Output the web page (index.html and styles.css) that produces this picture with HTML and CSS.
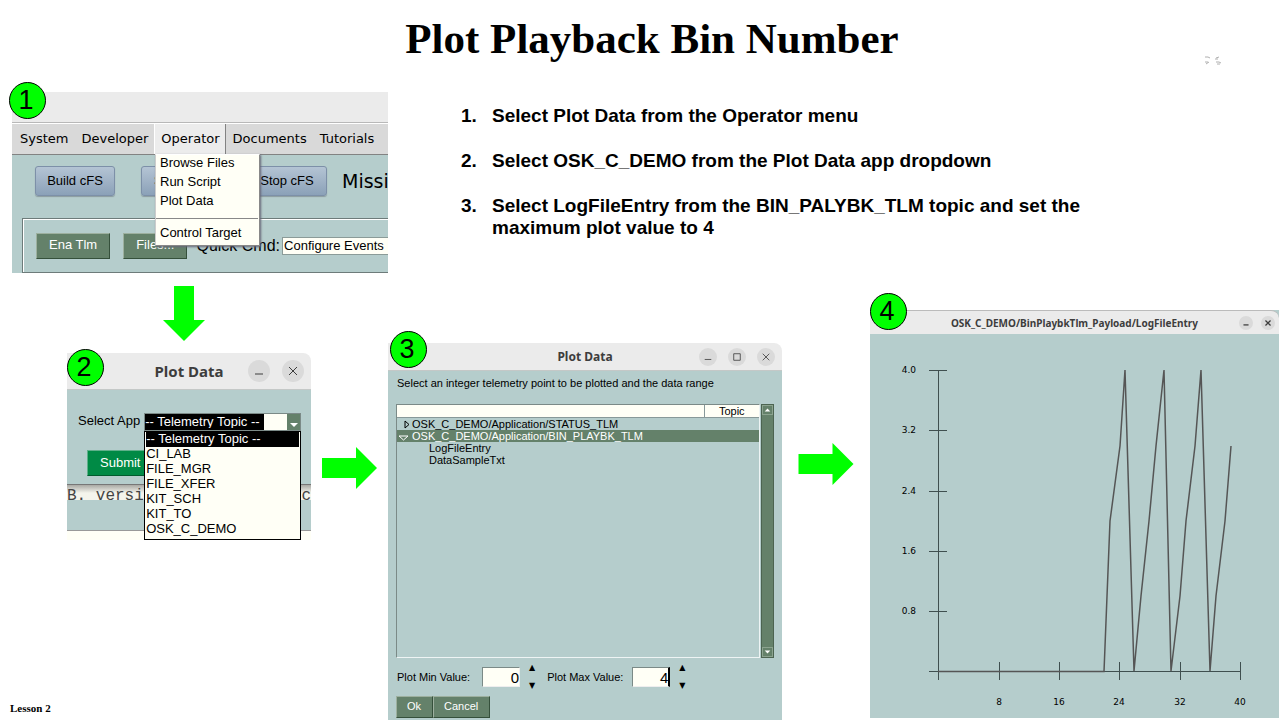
FILE: index.html
```html
<!DOCTYPE html>
<html lang="en">
<head>
<meta charset="utf-8">
<title>Plot Playback Bin Number</title>
<link rel="stylesheet" href="styles.css">
</head>
<body>
<div class="slide">
  <header class="slide-header">
    <h1>Plot Playback Bin Number</h1>
    <svg class="mark" width="18" height="10" viewBox="0 0 18 10" aria-hidden="true">
      <path d="M1 1h3l2 1M1 6h3M2 8l3-2M12 2l3-1M11 3h3M12 6h3l2 1M13 8l3 0" fill="none" stroke="#b0b0b0" stroke-width="1"/>
    </svg>
  </header>

  <main class="content">
    <div class="left">
      <section class="figure main-window">
        <span class="badge">1</span>
        <div class="clip">
          <div class="blank-title"></div>
          <nav class="menubar">
            <button class="menu">System</button>
            <button class="menu">Developer</button>
            <button class="menu open">Operator</button>
            <button class="menu">Documents</button>
            <button class="menu">Tutorials</button>
          </nav>
          <div class="toolbar">
            <button class="blue-btn">Build cFS</button>
            <button class="blue-btn">Start cFS</button>
            <button class="blue-btn">Stop cFS</button>
            <span class="mission">Mission</span>
          </div>
          <div class="cmd-frame">
            <button class="green-btn">Ena Tlm</button>
            <button class="green-btn">Files...</button>
            <label class="quick" for="quick">Quick Cmd:</label>
            <select class="quick-select" id="quick"><option>Configure Events</option></select>
          </div>
        </div>
        <ul class="drop-menu">
          <li>Browse Files</li>
          <li>Run Script</li>
          <li>Plot Data</li>
          <li class="split">Control Target</li>
        </ul>
      </section>

      <svg class="arrow-down" width="42" height="55" viewBox="0 0 42 55" aria-hidden="true"><path d="M11 0h20v34h11L21 55 0 34h11z" fill="#0f0"/></svg>

      <div class="step-two">
        <section class="figure app-window">
          <span class="badge">2</span>
          <div class="titlebar">
            <h2>Plot Data</h2>
            <div class="controls">
              <button aria-label="Minimize"><svg viewBox="0 0 22 22"><path d="M7 14h8"/></svg></button>
              <button aria-label="Close"><svg viewBox="0 0 22 22"><path d="M7 7l8 8M15 7l-8 8"/></svg></button>
            </div>
          </div>
          <div class="app-body">
            <div class="app-row">
              <label for="app">Select App</label>
              <div class="combo">
                <select id="app"><option>-- Telemetry Topic --</option></select>
                <span class="combo-arrow"></span>
                <ul class="combo-list">
                  <li class="active">-- Telemetry Topic --</li>
                  <li>CI_LAB</li>
                  <li>FILE_MGR</li>
                  <li>FILE_XFER</li>
                  <li>KIT_SCH</li>
                  <li>KIT_TO</li>
                  <li>OSK_C_DEMO</li>
                </ul>
              </div>
            </div>
            <button class="submit">Submit</button>
          </div>
          <div class="behind-text"><span>B. versi</span><span>-c</span></div>
          <div class="behind-teal"></div>
          <div class="behind-cream"></div>
        </section>
        <svg class="arrow-right" width="55" height="42" viewBox="0 0 55 42" aria-hidden="true"><path d="M0 11h34V0l21 21-21 21V31H0z" fill="#0f0"/></svg>
      </div>
      <footer class="lesson">Lesson 2</footer>
    </div>

    <div class="right">
      <ol class="steps">
        <li>Select Plot Data from the Operator menu</li>
        <li>Select OSK_C_DEMO from the Plot Data app dropdown</li>
        <li>Select LogFileEntry from the BIN_PALYBK_TLM topic and set the maximum plot value to 4</li>
      </ol>

      <div class="windows">
        <section class="figure tree-window">
          <span class="badge">3</span>
          <div class="titlebar">
            <h2>Plot Data</h2>
            <div class="controls">
              <button aria-label="Minimize"><svg viewBox="0 0 22 22"><path d="M7 14h8"/></svg></button>
              <button aria-label="Maximize"><svg viewBox="0 0 22 22"><path d="M7 7h8v8H7z"/></svg></button>
              <button aria-label="Close"><svg viewBox="0 0 22 22"><path d="M7 7l8 8M15 7l-8 8"/></svg></button>
            </div>
          </div>
          <div class="tree-body">
            <p>Select an integer telemetry point to be plotted and the data range</p>
            <div class="tree-box">
              <div class="tree">
                <table>
                  <thead><tr><th></th><th class="topic">Topic</th></tr></thead>
                  <tbody>
                    <tr><td colspan="2"><svg class="twisty" viewBox="0 0 10 10"><path d="M3 1v7l4-3.500z"/></svg>OSK_C_DEMO/Application/STATUS_TLM</td></tr>
                    <tr class="selected"><td colspan="2"><svg class="twisty" viewBox="0 0 10 10"><path d="M0 4h9L4.500 8z"/></svg>OSK_C_DEMO/Application/BIN_PLAYBK_TLM</td></tr>
                    <tr><td class="leaf" colspan="2">LogFileEntry</td></tr>
                    <tr><td class="leaf" colspan="2">DataSampleTxt</td></tr>
                  </tbody>
                </table>
              </div>
              <div class="scroll">
                <svg width="11" height="10" viewBox="0 0 11 10"><path d="M2 7h7L5.500 3z"/></svg>
                <svg width="11" height="10" viewBox="0 0 11 10"><path d="M2 3h7L5.500 7z"/></svg>
              </div>
            </div>
            <div class="range">
              <label for="min">Plot Min Value:</label>
              <input id="min" type="text" value="0">
              <div class="spin"><button aria-label="Increase minimum">▲</button><button aria-label="Decrease minimum">▼</button></div>
              <label for="max">Plot Max Value:</label>
              <input class="focused" id="max" type="text" value="4">
              <div class="spin"><button aria-label="Increase maximum">▲</button><button aria-label="Decrease maximum">▼</button></div>
            </div>
            <div class="actions">
              <button class="green-btn small">Ok</button>
              <button class="green-btn small">Cancel</button>
            </div>
          </div>
        </section>

        <svg class="arrow-right second" width="56" height="42" viewBox="0 0 55 42" aria-hidden="true"><path d="M0 11h34V0l21 21-21 21V31H0z" fill="#0f0"/></svg>

        <section class="figure chart-window">
          <span class="badge">4</span>
          <div class="titlebar">
            <h2>OSK_C_DEMO/BinPlaybkTlm_Payload/LogFileEntry</h2>
            <div class="controls">
              <button aria-label="Minimize"><svg viewBox="0 0 22 22"><path d="M7 14h8"/></svg></button>
              <button aria-label="Close"><svg viewBox="0 0 22 22"><path d="M7 7l8 8M15 7l-8 8"/></svg></button>
            </div>
          </div>
          <svg class="chart" viewBox="0 0 409 384" role="img" aria-label="LogFileEntry plot">
            <path class="axis" d="M68.500 36V346M59 337.500H370M59 36.500h18M59 96.500h18M59 157.500h18M59 217.500h18M59 277.500h18M129.500 328v18M189.500 328v18M249.500 328v18M310.500 328v18M370.500 328v18"/>
            <path class="series" d="M68 337.500H234L240 187 250 112 255 36 264 337 271 262 279 187 286 112 294 36 301 337 310 262 316 187 325 112 331 36 340 337 346 262 355 187 361 112"/>
            <g class="ylabels">
              <text x="46" y="39">4.0</text><text x="46" y="99">3.2</text><text x="46" y="160">2.4</text><text x="46" y="220">1.6</text><text x="46" y="280">0.8</text>
            </g>
            <g class="xlabels">
              <text x="129" y="371">8</text><text x="189" y="371">16</text><text x="249" y="371">24</text><text x="310" y="371">32</text><text x="370" y="371">40</text>
            </g>
          </svg>
        </section>
      </div>
    </div>
  </main>
</div>
</body>
</html>
```

FILE: styles.css
```css
* { box-sizing: border-box; }
body {
  margin: 0;
  background: #fff;
  color: #000;
  font-family: "Liberation Sans", Arial, sans-serif;
  font-size: 13px;
}
button, input, select {
  font-family: inherit;
  font-size: inherit;
  color: inherit;
  margin: 0;
  padding: 0;
  border: 0;
  border-radius: 0;
  background: none;
}
select { appearance: none; }
ul, ol { margin: 0; padding: 0; list-style: none; }
h1, h2, p { margin: 0; }

.slide { min-height: 100vh; display: flex; flex-direction: column; }
.slide-header {
  height: 92px;
  padding-left: 24px;
  position: relative;
  text-align: center;
}
h1 {
  font-family: "Liberation Serif", "Times New Roman", serif;
  font-size: 43px;
  line-height: 48px;
  padding-top: 15px;
}
.mark { position: absolute; top: 56px; right: 58px; }

.content { flex: 1; display: flex; padding: 0 1px 0 12px; }
.left { flex: 376 1 0; min-width: 0; display: flex; flex-direction: column; }
.right { flex: 891 1 0; min-width: 0; display: flex; flex-direction: column; justify-content: space-between; }
.figure { position: relative; }
.badge {
  position: absolute;
  z-index: 3;
  width: 37px;
  height: 37px;
  border: 1px solid #000;
  border-radius: 50%;
  background: #0f0;
  font-size: 27px;
  line-height: 35px;
  text-align: center;
  padding-right: 3px;
}

/* Main window */
.main-window .badge { left: -3px; top: -10px; }
.clip { overflow: hidden; background: #b5cdcc; }
.blank-title { height: 31px; background: #ebebeb; border-bottom: 1px solid #b8b8b8; }
.menubar {
  display: flex;
  height: 32px;
  padding-left: 1px;
  background: #d9d9d9;
  border-top: 1px solid #fff;
  border-bottom: 1px solid #828282;
  font-family: "DejaVu Sans", sans-serif;
  font-size: 13px;
}
.menu { padding: 0 6px 2px 7px; }
.menu.open { background: #ececec; border-left: 1px solid #fff; border-right: 1px solid #828282; padding: 0 5px 2px 6px; }
.toolbar { display: flex; gap: 26px; padding: 11px 0 0 23px; height: 63px; }
.blue-btn {
  flex: none;
  width: 80px;
  height: 30px;
  border: 1px solid #7d90a8;
  border-radius: 3px;
  background: linear-gradient(#b4c4d4, #8ba1b8);
  box-shadow: 0 1px 1px #8b9c9f;
  padding-bottom: 1px;
}
.mission { font-family: "DejaVu Sans", sans-serif; font-size: 19px; line-height: 30px; margin-left: -11px; }
.cmd-frame {
  display: flex;
  align-items: center;
  height: 55px;
  margin-left: 10px;
  border: 1px solid #6d7b7a;
  border-right: 0;
  box-shadow: inset 1px 1px 0 #fff;
  padding-left: 13px;
}
.green-btn {
  flex: none;
  height: 26px;
  color: #fff;
  background: #64816a;
  border: 1px solid;
  border-color: #9db09f #35503b #35503b #9db09f;
  padding: 0 12px 2px;
}
.cmd-frame .green-btn { margin-right: 13px; }
.quick { font-size: 16px; flex: none; margin-left: -4px; }
.quick-select {
  flex: none;
  width: 140px;
  height: 18px;
  margin-left: 2px;
  background: #fffff6;
  border: 1px solid #8b9b98;
  padding: 0 0 1px 1px;
}
.drop-menu {
  position: absolute;
  z-index: 2;
  left: 143px;
  top: 62px;
  width: 105px;
  background: #fffff6;
  border: 1px solid;
  border-color: #fff #888 #888 #ccc;
  padding: 0 0 1px 4px;
  box-shadow: 1px 1px 2px #667;
}
.drop-menu li { height: 19px; line-height: 16px; }
.drop-menu .split { height: auto; margin: 6px 1px 0 -4px; padding: 6px 0 3px 4px; border-top: 1px solid #888; }

/* Arrows */
.arrow-down { align-self: center; margin: 13px 32px 12px 0; }
.arrow-right { flex: none; }
.step-two .arrow-right { margin: 94px 0 0 11px; }
.arrow-right.second { margin: 0 16px 235px; align-self: flex-end; }

/* Title bars */
.titlebar {
  position: relative;
  display: flex;
  align-items: center;
  justify-content: center;
  background: #ebebeb;
  color: #3d3d3d;
  border-radius: 0 8px 0 0;
  font-family: "Noto Sans", sans-serif;
}
.controls { position: absolute; right: 7px; top: 0; bottom: 0; display: flex; align-items: center; gap: 12px; }
.controls button { display: flex; border-radius: 50%; background: #dadada; }
.controls svg { width: 22px; height: 22px; fill: none; stroke: #3d3d3d; stroke-width: 1; }

/* Application picker */
.step-two { display: flex; align-items: flex-start; padding-left: 55px; }
.app-window { flex: 0 1 244px; }
.app-window .badge { left: 0; top: -4px; }
.app-window .titlebar { height: 37px; border-bottom: 1px solid #c4c8c7; }
.app-window h2 { font-size: 15px; }
.app-body { height: 94px; background: #b5cdcc; padding: 23px 10px 0 11px; }
.app-row { display: flex; align-items: flex-start; }
.app-row label { line-height: 15px; margin-right: 4px; }
.combo { position: relative; flex: 1; height: 18px; border: 1px solid #7b8a87; background: #fffff6; }
.combo select {
  display: block;
  width: 100%;
  height: 16px;
  padding-bottom: 2px;
  color: #fff;
  background: linear-gradient(#000, #000) no-repeat 0 0 / 119px 100%;
}
.combo-arrow { position: absolute; right: 0; top: 0; width: 13px; height: 16px; background: #64816a; }
.combo-arrow::after { content: ""; position: absolute; left: 3px; top: 9px; border: 4px solid transparent; border-top-color: #fff; border-bottom: 0; }
.combo-list { position: absolute; z-index: 2; left: -1px; right: -1px; top: 17px; border: 1px solid #000; background: #fffff6; padding: 0 1px 2px; }
.combo-list li { height: 15px; line-height: 14px; }
.combo-list .active { background: #000; color: #fff; }
.submit { display: block; width: 80px; height: 26px; margin: 19px 0 0 9px; color: #fff; background: #008a45; border: 1px solid #5fb08a; border-bottom-color: #005c2e; padding: 0 12px 2px; text-align: left; }
.behind-text {
  height: 16px;
  display: flex;
  justify-content: space-between;
  overflow: hidden;
  border-top: 1px solid #777;
  background: linear-gradient(#a9a9a4, #f4f4ec 8px);
  font-family: "Liberation Mono", monospace;
  font-size: 16px;
  line-height: 22px;
  color: #444;
}
.behind-teal { height: 31px; background: #b5cdcc; border-bottom: 1px solid #999; }
.behind-cream { height: 9px; background: #fffff6; }

/* Steps */
.steps { margin: 13px 0 0 73px; max-width: 640px; counter-reset: step; font-size: 19px; font-weight: bold; line-height: 22px; }
.steps li { position: relative; padding-left: 31px; margin-bottom: 23px; counter-increment: step; }
.steps li::before { content: counter(step) "."; position: absolute; left: 0; top: 0; }
.windows { display: flex; align-items: flex-end; }

/* Telemetry tree */
.tree-window { flex: 394 1 0; min-width: 0; }
.tree-window .badge { left: 2px; top: -12px; }
.tree-window .titlebar { height: 28px; border-bottom: 1px solid #c4c8c7; }
.tree-window h2 { font-size: 12px; }
.tree-window .controls svg { width: 18px; height: 18px; }
.tree-window .controls { gap: 11px; }
.tree-body { background: #b5cdcc; padding: 5px 8px 2px; font-size: 11px; }
.tree-body p { line-height: 14px; padding-left: 1px; }
.tree-box { display: flex; gap: 1px; height: 254px; margin-top: 14px; }
.tree { flex: 1; border: 1px solid; border-color: #7b8a87 #eef4f4 #eef4f4 #7b8a87; }
.tree table { width: 100%; border-collapse: collapse; table-layout: fixed; }
.tree th { height: 12px; padding: 0; background: #fffff6; font-weight: normal; line-height: 12px; border-bottom: 1px solid #899; }
.tree .topic { width: 55px; border-left: 1px solid #899; }
.tree td { padding: 0 0 0 5px; line-height: 12px; height: 12px; white-space: nowrap; }
.tree .leaf { padding-left: 32px; }
.tree .selected { background: #64816a; color: #fff; }
.twisty { width: 10px; height: 10px; fill: none; stroke: currentColor; vertical-align: -2px; }
.selected .twisty { margin-left: -3px; margin-right: 3px; }
.scroll { width: 13px; background: #64816a; border: 1px solid #4c6451; display: flex; flex-direction: column; justify-content: space-between; }
.scroll svg { display: block; fill: #fff; border: 1px solid #8ba38f; }
.range { display: flex; align-items: center; height: 32px; margin-top: 3px; padding-left: 1px; }
.range label { padding-bottom: 1px; }
.range input { width: 38px; height: 20px; background: #fffff6; border: 1px solid; border-color: #7b8a87 #eee #eee #7b8a87; font-size: 15px; text-align: right; margin-left: 12px; }
.range .focused { border-right: 2px solid #000; margin-left: 9px; }
.spin { display: flex; flex-direction: column; justify-content: space-between; height: 28px; margin: 0 10px 0 7px; }
.spin button { width: 10px; height: 10px; font-family: "DejaVu Sans", sans-serif; font-size: 8px; line-height: 10px; }
.actions { display: flex; margin-top: 3px; }
.green-btn.small { height: 22px; padding: 0 11px 2px 10px; }

/* Chart */
.chart-window { flex: 409 1 0; min-width: 0; margin-bottom: 2px; background: #b5cdcc; }
.chart-window .badge { left: 0; top: -17px; }
.chart-window .titlebar { height: 24px; border-top: 1px solid #bbb; }
.chart-window h2 { font-size: 10px; }
.chart-window .controls { right: 4px; gap: 8px; }
.chart-window .controls svg { width: 14px; height: 14px; stroke-width: 2; }
.chart { display: block; width: 100%; }
.axis { fill: none; stroke: #3f4f4f; stroke-width: 1; }
.series { fill: none; stroke: #555; stroke-width: 1.5; }
.chart text { font-family: "DejaVu Sans", sans-serif; font-size: 9px; }
.ylabels { text-anchor: end; }
.xlabels { text-anchor: middle; }

.lesson { margin: auto 0 5px -2px; font-family: "Liberation Serif", serif; font-size: 11px; font-weight: bold; line-height: 14px; }
```
